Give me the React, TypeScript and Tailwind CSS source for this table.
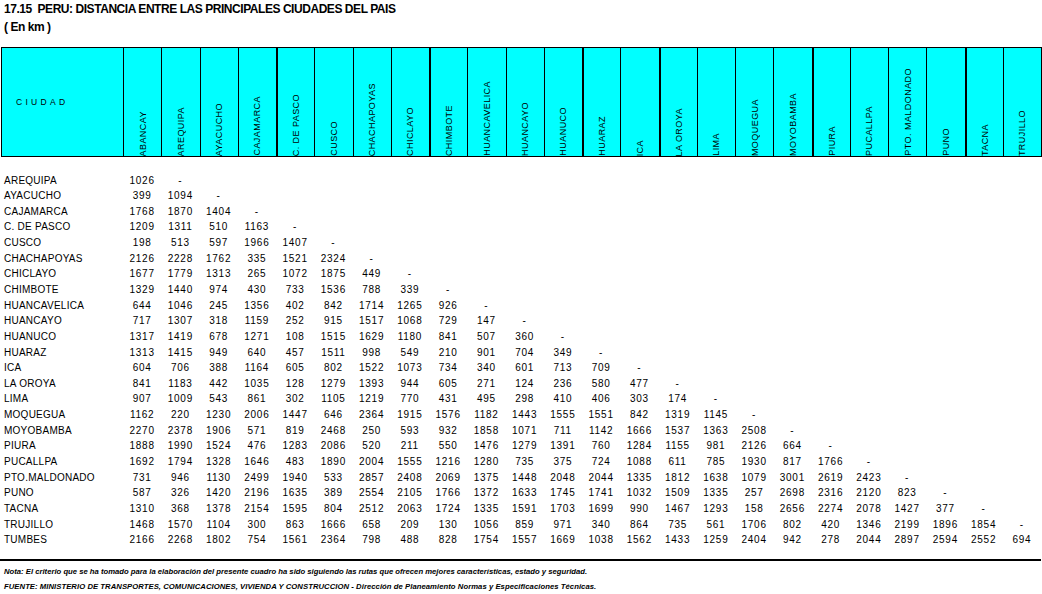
import React from "react";

const cities = [
  "ABANCAY",
  "AREQUIPA",
  "AYACUCHO",
  "CAJAMARCA",
  "C. DE PASCO",
  "CUSCO",
  "CHACHAPOYAS",
  "CHICLAYO",
  "CHIMBOTE",
  "HUANCAVELICA",
  "HUANCAYO",
  "HUANUCO",
  "HUARAZ",
  "ICA",
  "LA OROYA",
  "LIMA",
  "MOQUEGUA",
  "MOYOBAMBA",
  "PIURA",
  "PUCALLPA",
  "PTO. MALDONADO",
  "PUNO",
  "TACNA",
  "TRUJILLO",
];

// columns with a heavier rule on their left side
const thick = new Set([4, 8, 12, 14, 18, 22]);

const rows: [string, string][] = [
  ["AREQUIPA", "1026"],
  ["AYACUCHO", "399 1094"],
  ["CAJAMARCA", "1768 1870 1404"],
  ["C. DE PASCO", "1209 1311 510 1163"],
  ["CUSCO", "198 513 597 1966 1407"],
  ["CHACHAPOYAS", "2126 2228 1762 335 1521 2324"],
  ["CHICLAYO", "1677 1779 1313 265 1072 1875 449"],
  ["CHIMBOTE", "1329 1440 974 430 733 1536 788 339"],
  ["HUANCAVELICA", "644 1046 245 1356 402 842 1714 1265 926"],
  ["HUANCAYO", "717 1307 318 1159 252 915 1517 1068 729 147"],
  ["HUANUCO", "1317 1419 678 1271 108 1515 1629 1180 841 507 360"],
  ["HUARAZ", "1313 1415 949 640 457 1511 998 549 210 901 704 349"],
  ["ICA", "604 706 388 1164 605 802 1522 1073 734 340 601 713 709"],
  ["LA OROYA", "841 1183 442 1035 128 1279 1393 944 605 271 124 236 580 477"],
  ["LIMA", "907 1009 543 861 302 1105 1219 770 431 495 298 410 406 303 174"],
  ["MOQUEGUA", "1162 220 1230 2006 1447 646 2364 1915 1576 1182 1443 1555 1551 842 1319 1145"],
  ["MOYOBAMBA", "2270 2378 1906 571 819 2468 250 593 932 1858 1071 711 1142 1666 1537 1363 2508"],
  ["PIURA", "1888 1990 1524 476 1283 2086 520 211 550 1476 1279 1391 760 1284 1155 981 2126 664"],
  ["PUCALLPA", "1692 1794 1328 1646 483 1890 2004 1555 1216 1280 735 375 724 1088 611 785 1930 817 1766"],
  ["PTO.MALDONADO", "731 946 1130 2499 1940 533 2857 2408 2069 1375 1448 2048 2044 1335 1812 1638 1079 3001 2619 2423"],
  ["PUNO", "587 326 1420 2196 1635 389 2554 2105 1766 1372 1633 1745 1741 1032 1509 1335 257 2698 2316 2120 823"],
  ["TACNA", "1310 368 1378 2154 1595 804 2512 2063 1724 1335 1591 1703 1699 990 1467 1293 158 2656 2274 2078 1427 377"],
  ["TRUJILLO", "1468 1570 1104 300 863 1666 658 209 130 1056 859 971 340 864 735 561 1706 802 420 1346 2199 1896 1854"],
  ["TUMBES", "2166 2268 1802 754 1561 2364 798 488 828 1754 1557 1669 1038 1562 1433 1259 2404 942 278 2044 2897 2594 2552 694"],
];

export default function App() {
  return (
    <div className="w-[1042px] h-[594px] bg-white text-black overflow-hidden [font-family:'Liberation_Sans',Arial,sans-serif]">
      {/* title */}
      <div className="h-[47px] pl-[4px] pt-[1px] text-[12px] font-bold leading-[17.5px] tracking-[-0.45px]">
        <div>17.15&nbsp; PERU: DISTANCIA ENTRE LAS PRINCIPALES CIUDADES DEL PAIS</div>
        <div>( En km )</div>
      </div>

      {/* header */}
      <div className="ml-[1px] w-[1041px] h-[110px] border border-black bg-[#00ffff] grid grid-cols-[121px_repeat(24,minmax(0,1fr))]">
        <div className="flex items-center pl-[14px] text-[8.5px] tracking-[3.3px]">CIUDAD</div>
        {cities.map((c, i) => (
          <div
            key={c}
            className={`flex flex-col justify-end items-center border-black ${thick.has(i) ? "border-l-2" : "border-l"}`}
          >
            <span className="[writing-mode:vertical-rl] rotate-180 whitespace-nowrap text-[9px] leading-[10px] tracking-[0.45px]">
              {c}
            </span>
          </div>
        ))}
      </div>

      {/* data */}
      <div className="ml-[1px] w-[1041px] px-[1px] mt-[15.7px]">
        {rows.map(([name, vals], r) => {
          const v = vals.split(" ");
          return (
            <div
              key={name}
              className="h-[15.652px] grid grid-cols-[121px_repeat(24,minmax(0,1fr))] items-center text-[10px] leading-[12px]"
            >
              <div className="pl-[2px] whitespace-nowrap tracking-[0.25px]">{name}</div>
              {cities.map((c, i) => (
                <div key={c} className="text-center tracking-[0.7px]">
                  {i < v.length ? v[i] : i === r + 1 ? "-" : ""}
                </div>
              ))}
            </div>
          );
        })}
      </div>

      {/* footer */}
      <div className="mt-[11px] w-[1041px] h-[2px] bg-black" />
      <div className="mt-[2.5px] pl-[4px] text-[7.7px] leading-[15px] font-bold italic whitespace-nowrap">
        <div>
          Nota: El criterio que se ha tomado para la elaboración del presente cuadro ha sido siguiendo las rutas
          que ofrecen mejores características, estado y seguridad.
        </div>
        <div className="tracking-[0.05px]">
          FUENTE: MINISTERIO DE TRANSPORTES, COMUNICACIONES, VIVIENDA Y CONSTRUCCION - Dirección de Planeamiento
          Normas y Especificaciones Técnicas.
        </div>
      </div>
    </div>
  );
}
